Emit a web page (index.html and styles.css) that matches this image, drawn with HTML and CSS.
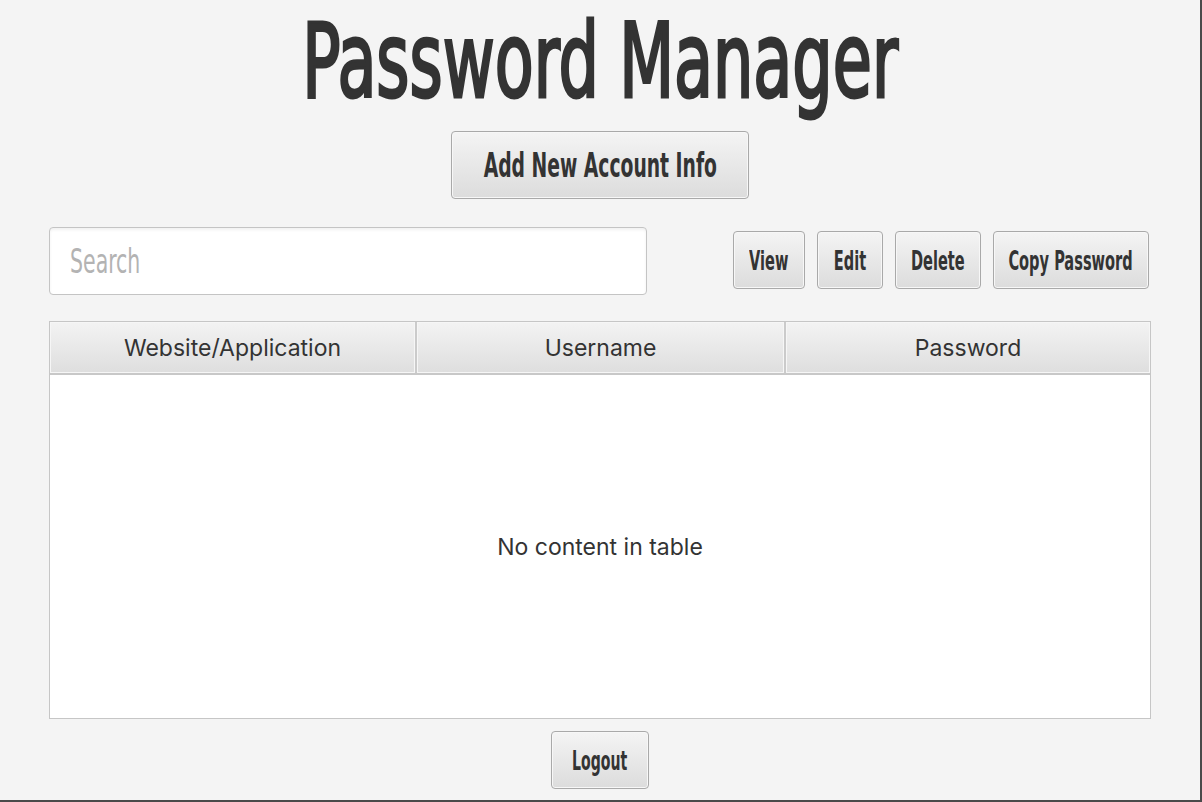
FILE: index.html
```html
<!DOCTYPE html>
<html>
<head>
<meta charset="utf-8">
<link rel="stylesheet" href="styles.css">
</head>
<body>
<div class="window">
  <h1 class="title"><span class="cond">Password Manager</span></h1>
  <div class="add-row">
    <button class="btn btn-add"><span class="cond">Add New Account Info</span></button>
  </div>
  <div class="toolbar">
    <div class="search"><span class="cond">Search</span></div>
    <div class="actions">
      <button class="btn btn-small w-view"><span class="cond">View</span></button>
      <button class="btn btn-small w-edit"><span class="cond">Edit</span></button>
      <button class="btn btn-small w-delete"><span class="cond">Delete</span></button>
      <button class="btn btn-small w-copy"><span class="cond">Copy Password</span></button>
    </div>
  </div>
  <div class="table">
    <div class="thead">
      <div class="th">Website/Application</div>
      <div class="th">Username</div>
      <div class="th">Password</div>
    </div>
    <div class="tbody">No content in table</div>
  </div>
  <div class="logout-row">
    <button class="btn btn-logout"><span class="cond">Logout</span></button>
  </div>
</div>
</body>
</html>
```
FILE: styles.css
```css
html, body {
  margin: 0;
  padding: 0;
}
body {
  background: #f4f4f4;
  color: #333333;
}
.window {
  width: 1202px;
  height: 802px;
  box-sizing: border-box;
  border-right: 2px solid #4a4a4a;
  border-bottom: 2px solid #4a4a4a;
  display: flex;
  flex-direction: column;
  align-items: stretch;
  overflow: hidden;
}
.cond {
  display: inline-block;
  font-family: "DejaVu Sans", sans-serif;
  font-stretch: condensed;
  white-space: nowrap;
}
.title {
  margin: 0;
  height: 120px;
  font-weight: normal;
  font-size: 104px;
  line-height: 122px;
  text-align: center;
  color: #333;
}
.title .cond {
  transform: scaleX(0.68);
  -webkit-text-stroke: 3px #333;
}
.add-row {
  margin-top: 11px;
  display: flex;
  justify-content: center;
}
.btn {
  box-sizing: border-box;
  border: 1px solid #a9a9a9;
  border-radius: 4px;
  background: linear-gradient(#f4f4f4, #dcdcdc);
  box-shadow: inset 0 0 0 1px #f7f7f7;
  color: #333;
  padding: 0;
  margin: 0;
  display: flex;
  align-items: center;
  justify-content: center;
  overflow: visible;
}
.btn .cond {
  font-weight: bold;
  transform: scaleX(0.6);
}
.btn-add {
  width: 298px;
  height: 68px;
  font-size: 34px;
}
.btn-add .cond {
  transform: scaleX(0.613);
}
.toolbar {
  margin-top: 28px;
  margin-left: 49px;
  width: 1100px;
  display: flex;
  justify-content: space-between;
  align-items: flex-start;
}
.search {
  box-sizing: border-box;
  width: 598px;
  height: 68px;
  background: #ffffff;
  border: 1px solid #c4c4c4;
  border-radius: 4px;
  box-shadow: inset 0 2px 3px rgba(0,0,0,0.06);
  color: #b3b3b3;
  font-size: 34px;
  display: flex;
  align-items: center;
  padding-left: 20px;
}
.search .cond {
  transform: scaleX(0.67);
  transform-origin: left center;
}
.actions {
  margin-top: 4px;
  display: flex;
  gap: 12px;
}
.btn-small {
  height: 58px;
  font-size: 27px;
}
.w-view { width: 72px; }
.w-edit { width: 66px; }
.w-delete { width: 86px; }
.w-copy { width: 156px; }
.table {
  box-sizing: border-box;
  margin-top: 26px;
  margin-left: 49px;
  width: 1102px;
  height: 398px;
  border: 1px solid #c6c6c6;
  background: #ffffff;
  display: flex;
  flex-direction: column;
}
.thead {
  display: grid;
  grid-template-columns: 367px 369px 1fr;
  height: 51px;
  border-bottom: 2px solid #c8c8c8;
  background: linear-gradient(#f3f3f3, #dedede);
}
.th {
  box-shadow: inset 0 0 0 1px #f6f6f6;
  border-right: 2px solid #cbcbcb;
  display: flex;
  align-items: center;
  justify-content: center;
  font-family: "Inter", "Liberation Sans", sans-serif;
  font-size: 23px;
  color: #333;
}
.th:last-child {
  border-right: none;
}
.tbody {
  flex: 1;
  display: flex;
  align-items: center;
  justify-content: center;
  font-family: "Inter", "Liberation Sans", sans-serif;
  font-size: 23px;
  color: #333;
}
.logout-row {
  margin-top: 12px;
  display: flex;
  justify-content: center;
}
.btn-logout {
  width: 98px;
  height: 58px;
  font-size: 27px;
}
.btn-logout .cond {
  transform: scaleX(0.58);
}
```
